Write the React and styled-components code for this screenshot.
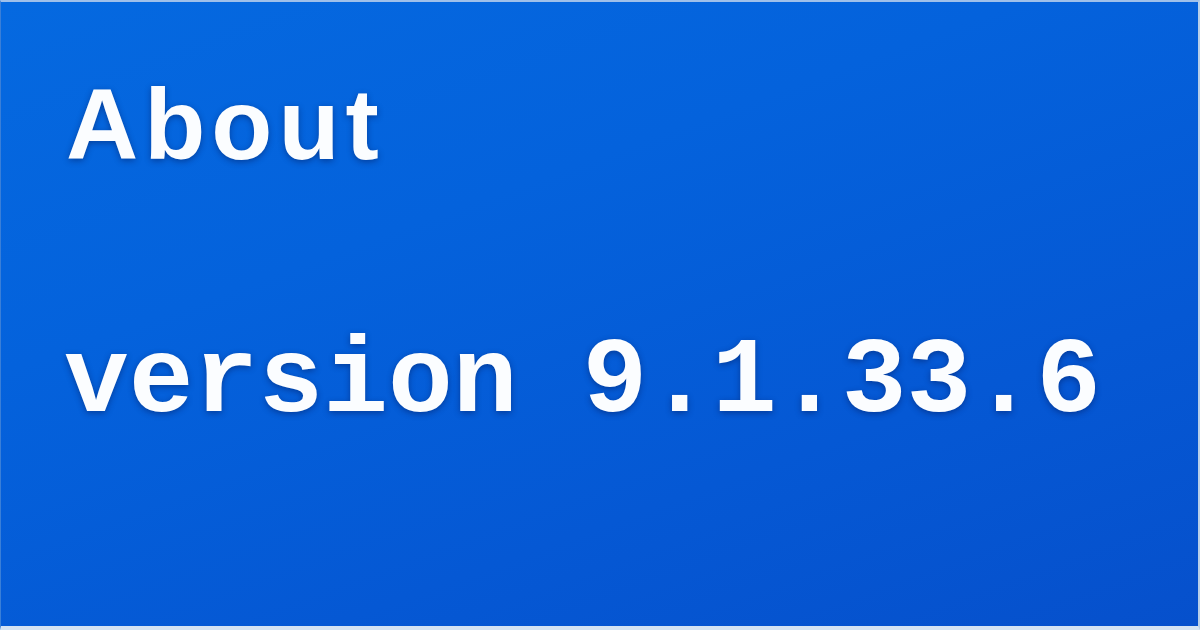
import React from "react";
import styled, { createGlobalStyle } from "styled-components";

const Global = createGlobalStyle`
  html, body { margin: 0; padding: 0; background: #d8e4f0; }
  #root { width: 1200px; height: 630px; }
`;

const Card = styled.div`
  box-sizing: border-box;
  width: 1200px;
  height: 630px;
  border-top: 2px solid #9fc0ea;
  border-right: 2px solid #b8cfe8;
  border-bottom: 4px solid #d4e3f3;
  border-left: 1px solid #3a7fd8;
  background: linear-gradient(160deg, #0569e0 0%, #0462dc 35%, #0558d4 70%, #0650cc 100%);
  padding: 0 0 0 63px;
  display: flex;
  flex-direction: column;
  align-items: flex-start;
`;

const Title = styled.h1`
  margin: 72px 0 0 2px;
  font-family: "Liberation Sans", Arial, sans-serif;
  font-weight: 700;
  font-size: 100px;
  line-height: 100px;
  letter-spacing: 6px;
  color: #fbfdff;
  text-shadow: 0 2px 6px rgba(0, 20, 80, 0.45);
`;

const Version = styled.p`
  margin: 154px 0 0 0;
  font-family: "Liberation Mono", "DejaVu Sans Mono", monospace;
  font-weight: 700;
  font-size: 108px;
  line-height: 108px;
  color: #fbfdff;
  text-shadow: 0 2px 6px rgba(0, 20, 80, 0.45);
  white-space: pre;
`;

export default function App() {
  return (
    <>
      <Global />
      <Card>
        <Title>About</Title>
        <Version>version 9.1.33.6</Version>
      </Card>
    </>
  );
}
